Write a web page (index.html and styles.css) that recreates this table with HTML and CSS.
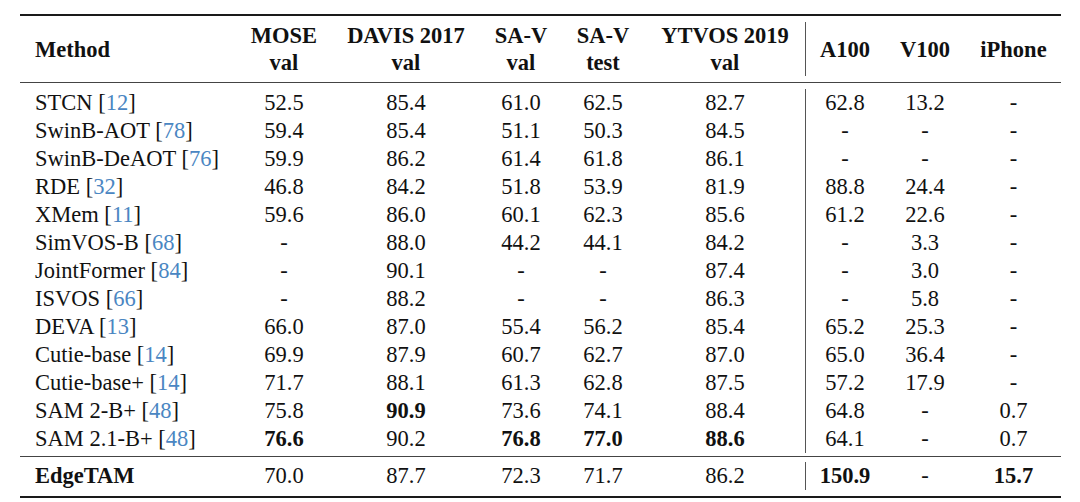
FILE: index.html
```html
<!DOCTYPE html>
<html>
<head>
<meta charset="utf-8">
<link rel="stylesheet" href="styles.css">
</head>
<body>
<div class="table">
  <div class="sec head">
    <div class="grp left">
      <div class="c method hd">Method</div>
      <div class="c hd">MOSE<br>val</div>
      <div class="c hd">DAVIS 2017<br>val</div>
      <div class="c hd">SA-V<br>val</div>
      <div class="c hd">SA-V<br>test</div>
      <div class="c hd">YTVOS 2019<br>val</div>
    </div>
    <div class="grp right">
      <div class="c hd">A100</div>
      <div class="c hd">V100</div>
      <div class="c hd">iPhone</div>
    </div>
  </div>
  <div class="sec body">
    <div class="grp left">
      <div class="c method">STCN [<span class="ref">12</span>]</div><div class="c">52.5</div><div class="c">85.4</div><div class="c">61.0</div><div class="c">62.5</div><div class="c">82.7</div>
      <div class="c method">SwinB-AOT [<span class="ref">78</span>]</div><div class="c">59.4</div><div class="c">85.4</div><div class="c">51.1</div><div class="c">50.3</div><div class="c">84.5</div>
      <div class="c method">SwinB-DeAOT [<span class="ref">76</span>]</div><div class="c">59.9</div><div class="c">86.2</div><div class="c">61.4</div><div class="c">61.8</div><div class="c">86.1</div>
      <div class="c method">RDE [<span class="ref">32</span>]</div><div class="c">46.8</div><div class="c">84.2</div><div class="c">51.8</div><div class="c">53.9</div><div class="c">81.9</div>
      <div class="c method">XMem [<span class="ref">11</span>]</div><div class="c">59.6</div><div class="c">86.0</div><div class="c">60.1</div><div class="c">62.3</div><div class="c">85.6</div>
      <div class="c method">SimVOS-B [<span class="ref">68</span>]</div><div class="c">-</div><div class="c">88.0</div><div class="c">44.2</div><div class="c">44.1</div><div class="c">84.2</div>
      <div class="c method">JointFormer [<span class="ref">84</span>]</div><div class="c">-</div><div class="c">90.1</div><div class="c">-</div><div class="c">-</div><div class="c">87.4</div>
      <div class="c method">ISVOS [<span class="ref">66</span>]</div><div class="c">-</div><div class="c">88.2</div><div class="c">-</div><div class="c">-</div><div class="c">86.3</div>
      <div class="c method">DEVA [<span class="ref">13</span>]</div><div class="c">66.0</div><div class="c">87.0</div><div class="c">55.4</div><div class="c">56.2</div><div class="c">85.4</div>
      <div class="c method">Cutie-base [<span class="ref">14</span>]</div><div class="c">69.9</div><div class="c">87.9</div><div class="c">60.7</div><div class="c">62.7</div><div class="c">87.0</div>
      <div class="c method">Cutie-base+ [<span class="ref">14</span>]</div><div class="c">71.7</div><div class="c">88.1</div><div class="c">61.3</div><div class="c">62.8</div><div class="c">87.5</div>
      <div class="c method">SAM 2-B+ [<span class="ref">48</span>]</div><div class="c">75.8</div><div class="c b">90.9</div><div class="c">73.6</div><div class="c">74.1</div><div class="c">88.4</div>
      <div class="c method">SAM 2.1-B+ [<span class="ref">48</span>]</div><div class="c b">76.6</div><div class="c">90.2</div><div class="c b">76.8</div><div class="c b">77.0</div><div class="c b">88.6</div>
    </div>
    <div class="grp right">
      <div class="c">62.8</div><div class="c">13.2</div><div class="c">-</div>
      <div class="c">-</div><div class="c">-</div><div class="c">-</div>
      <div class="c">-</div><div class="c">-</div><div class="c">-</div>
      <div class="c">88.8</div><div class="c">24.4</div><div class="c">-</div>
      <div class="c">61.2</div><div class="c">22.6</div><div class="c">-</div>
      <div class="c">-</div><div class="c">3.3</div><div class="c">-</div>
      <div class="c">-</div><div class="c">3.0</div><div class="c">-</div>
      <div class="c">-</div><div class="c">5.8</div><div class="c">-</div>
      <div class="c">65.2</div><div class="c">25.3</div><div class="c">-</div>
      <div class="c">65.0</div><div class="c">36.4</div><div class="c">-</div>
      <div class="c">57.2</div><div class="c">17.9</div><div class="c">-</div>
      <div class="c">64.8</div><div class="c">-</div><div class="c">0.7</div>
      <div class="c">64.1</div><div class="c">-</div><div class="c">0.7</div>
    </div>
  </div>
  <div class="sec foot">
    <div class="grp left">
      <div class="c method b">EdgeTAM</div><div class="c">70.0</div><div class="c">87.7</div><div class="c">72.3</div><div class="c">71.7</div><div class="c">86.2</div>
    </div>
    <div class="grp right">
      <div class="c b">150.9</div><div class="c">-</div><div class="c b">15.7</div>
    </div>
  </div>
</div>
</body>
</html>
```

FILE: styles.css
```css
html, body {
  margin: 0;
  padding: 0;
  background: #ffffff;
}

body {
  font-family: "Liberation Serif", "Times New Roman", serif;
  font-size: 22.5px;
  color: #111111;
}

.table {
  width: 1041px;
  margin: 14px 0 0 20px;
  border-top: 2px solid #1a1a1a;
  border-bottom: 2px solid #1a1a1a;
}

.sec {
  display: flex;
}

.head {
  padding: 6px 0 6px 0;
  border-bottom: 1px solid #444444;
}

.body {
  padding: 6px 0 3px 0;
  border-bottom: 1px solid #444444;
}

.foot {
  padding: 5px 0 6px 0;
}

.grp {
  display: grid;
  grid-auto-rows: 28px;
}

.left {
  grid-template-columns: 217px 94px 150px 80px 84px 160px;
}

.right {
  grid-template-columns: 78px 82px 95px;
  border-left: 1px solid #555555;
}

.head .grp {
  grid-auto-rows: 54px;
}

.c {
  line-height: 28px;
  text-align: center;
  white-space: nowrap;
}

.hd {
  font-weight: bold;
  line-height: 27px;
  align-self: center;
}

.method {
  text-align: left;
  padding-left: 15px;
}

.b {
  font-weight: bold;
}

.ref {
  color: #4a86c2;
}
```
